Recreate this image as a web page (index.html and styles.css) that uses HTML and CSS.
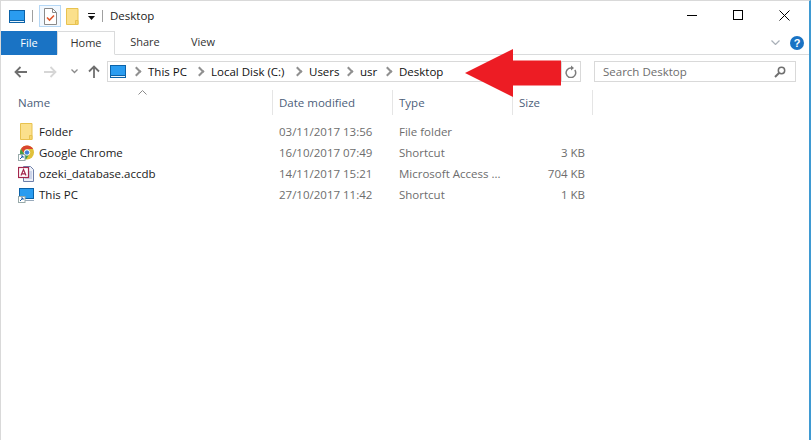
FILE: index.html
```html
<!DOCTYPE html>
<html lang="en">
<head>
<meta charset="utf-8">
<title>Desktop</title>
<link rel="stylesheet" href="styles.css">
</head>
<body>
<div class="window">
  <header class="titlebar">
    <svg class="ico monitor" viewBox="0 0 16 13"><rect width="16" height="13" fill="#0b62a8"/><rect x="1" y="1" width="14" height="9" fill="#2a9cf0"/><rect x="1" y="11" width="14" height="1" fill="#e8f4fc"/></svg>
    <span class="qsep"></span>
    <span class="qbtn"><svg class="ico" viewBox="0 0 13 17" width="13" height="17"><path d="M.5.5h8l4 4v12H.5z" fill="#fff" stroke="#8a8a8a"/><path d="M8.5.5v4h4" fill="none" stroke="#8a8a8a"/><path d="M3 9.500l2.500 2.500L10 7.500" fill="none" stroke="#e0562a" stroke-width="1.600"/></svg></span>
    <svg class="ico qfolder" viewBox="0 0 13 17" width="13" height="17"><path d="M.5.5h11.500v16H.5z" fill="#fbe08c" stroke="#e8c24f"/><path d="M9.500 12.500h2.500v4H9.500z" fill="#f6d66f" stroke="#e8c24f"/></svg>
    <svg class="ico qdrop" viewBox="0 0 7 7" width="7" height="7"><path d="M0 0h7v1H0z" fill="#111"/><path d="M0 3h7L3.500 7z" fill="#111"/></svg>
    <span class="qsep qsep-b"></span>
    <span class="title">Desktop</span>
    <span class="controls">
      <svg class="ctl" viewBox="0 0 46 20" width="46" height="20"><path d="M0 9.500h10" stroke="#000" fill="none"/></svg>
      <svg class="ctl" viewBox="0 0 46 20" width="46" height="20"><rect x="0.500" y="4.500" width="9" height="9" fill="none" stroke="#000"/></svg>
      <svg class="ctl ctl-x" viewBox="0 0 11 20" width="11" height="20"><path d="M.5 4.500l10 10M10.500 4.500l-10 10" stroke="#000" fill="none"/></svg>
    </span>
  </header>

  <nav class="ribbon">
    <span class="tab tab-file">File</span>
    <span class="tab tab-home">Home</span>
    <span class="tab tab-share">Share</span>
    <span class="tab tab-view">View</span>
    <span class="ribbon-end">
      <svg class="ico" viewBox="0 0 9 5" width="9" height="5"><path d="M.5.500l4 4 4-4" fill="none" stroke="#a9b0b8" stroke-width="1.200"/></svg>
      <span class="help">?</span>
    </span>
  </nav>

  <div class="navbar">
    <svg class="ico nav-back" viewBox="0 0 13 12" width="13" height="12"><path d="M6.500 1L1.500 6l5 5M1.500 6H13" fill="none" stroke="#6f6f6f" stroke-width="1.800"/></svg>
    <svg class="ico nav-fwd" viewBox="0 0 13 12" width="13" height="12"><path d="M6.500 1l5 5-5 5M11.500 6H0" fill="none" stroke="#d6d6d6" stroke-width="1.800"/></svg>
    <svg class="ico nav-down" viewBox="0 0 7 5" width="7" height="5"><path d="M.5.500l3 3 3-3" fill="none" stroke="#8a8a8a" stroke-width="1.300"/></svg>
    <svg class="ico nav-up" viewBox="0 0 12 13" width="12" height="13"><path d="M1 6.500l5-5 5 5M6 1.500V13" fill="none" stroke="#6f6f6f" stroke-width="1.800"/></svg>
    <div class="address">
      <svg class="ico addr-pc" viewBox="0 0 16 13" width="16" height="13"><rect width="16" height="13" fill="#0b62a8"/><rect x="1" y="1" width="14" height="9" fill="#2a9cf0"/><rect x="1" y="11" width="14" height="1" fill="#e8f4fc"/></svg>
      <span class="crumb crumb-pc">This PC</span>
      <span class="crumb crumb-disk">Local Disk (C:)</span>
      <span class="crumb crumb-users">Users</span>
      <span class="crumb crumb-usr">usr</span>
      <span class="crumb">Desktop</span>
    </div>
    <div class="refresh">
      <svg class="ico" viewBox="0 0 12 13" width="12" height="13"><path d="M9.800 4A4.800 4.800 0 1 1 6 2" fill="none" stroke="#7c7c7c" stroke-width="1.500" transform="translate(0 1)"/><path d="M6 .5v5l3-2.500z" fill="#7c7c7c"/></svg>
    </div>
    <div class="search">
      <span>Search Desktop</span>
      <svg class="ico" viewBox="0 0 12 12" width="12" height="12"><circle cx="7.500" cy="4.500" r="3.200" fill="none" stroke="#6f6f6f" stroke-width="1.500"/><path d="M5 7l-4 4" stroke="#6f6f6f" stroke-width="2"/></svg>
    </div>
  </div>

  <main class="list">
    <div class="row head">
      <span class="c-name">Name<svg class="sort" viewBox="0 0 9 5" width="9" height="5"><path d="M.5 4.500l4-4 4 4" fill="none" stroke="#8a8a8a"/></svg></span>
      <span class="c-date">Date modified</span>
      <span class="c-type">Type</span>
      <span class="c-size">Size</span>
    </div>
    <div class="rows">
      <div class="row">
        <span class="c-name"><svg class="ico fi" viewBox="0 0 16 17" width="16" height="17"><path d="M2.500.500h11.500v16H2.500z" fill="#fbe08c" stroke="#e8c24f"/><path d="M11.500 12.500H14v4h-2.500z" fill="#f6d66f" stroke="#e8c24f"/></svg>Folder</span>
        <span class="c-date">03/11/2017 13:56</span><span class="c-type">File folder</span><span class="c-size"></span>
      </div>
      <div class="row">
        <span class="c-name"><svg class="ico fi" viewBox="0 0 16 16" width="16" height="16"><circle cx="9" cy="7.500" r="7" fill="#e0c13a"/><path d="M9 .5a7 7 0 0 0-6 3.400l3 5.100a3.500 3.500 0 0 1 3-5h6.200A7 7 0 0 0 9 .5z" fill="#d9452e"/><path d="M3 3.900A7 7 0 0 0 8 14.400L11 9.500 6 9z" fill="#3f9d4a"/><circle cx="9" cy="7.500" r="2.700" fill="#3f7fd8" stroke="#fff"/><rect x=".5" y="9.500" width="6.500" height="6" fill="#fff" stroke="#9aa"/><path d="M2 14l3-3M3 11h2v2" stroke="#1f5fa8" fill="none"/></svg>Google Chrome</span>
        <span class="c-date">16/10/2017 07:49</span><span class="c-type">Shortcut</span><span class="c-size">3 KB</span>
      </div>
      <div class="row">
        <span class="c-name"><svg class="ico fi" viewBox="0 0 16 16" width="16" height="16"><path d="M5.500.500h7l3 3v12h-10z" fill="#eef1f8" stroke="#6f7fa8"/><path d="M7 6h7M7 8h7M7 10h7M7 12h7" stroke="#a9b6d8"/><rect x=".5" y="1.500" width="10" height="10" fill="#fff" stroke="#a4274d" stroke-width="1.200"/><path d="M3 9.500l2.500-6 2.500 6M3.800 7.800h3.400" fill="none" stroke="#a4274d" stroke-width="1.200"/></svg>ozeki_database.accdb</span>
        <span class="c-date">14/11/2017 15:21</span><span class="c-type">Microsoft Access ...</span><span class="c-size">704 KB</span>
      </div>
      <div class="row">
        <span class="c-name"><svg class="ico fi" viewBox="0 0 16 16" width="16" height="16"><rect x="1.500" y="1.500" width="14" height="10" fill="#2a9cf0" stroke="#0b62a8"/><path d="M5 13h11v1H5z" fill="#9ab"/><rect x=".5" y="9.500" width="6.500" height="6" fill="#fff" stroke="#9aa"/><path d="M2 14l3-3M3 11h2v2" stroke="#1f5fa8" fill="none"/></svg>This PC</span>
        <span class="c-date">27/10/2017 11:42</span><span class="c-type">Shortcut</span><span class="c-size">1 KB</span>
      </div>
    </div>
  </main>
</div>
<svg class="red-arrow" viewBox="0 0 96 48" width="96" height="48"><path d="M0 24L48 0v11.500h48v25H48V48z" fill="#ed1c24"/></svg>
</body>
</html>
```

FILE: styles.css
```css
* { box-sizing: border-box; }
html, body { margin: 0; height: 100%; overflow: hidden; }
body {
  font-family: "Open Sans", "Noto Sans", sans-serif;
  font-size: 11.5px;
  color: #1a1a1a;
  background: #fff;
  position: relative;
}
.window {
  height: 440px;
  width: 811px;
  display: flex;
  flex-direction: column;
  border-top: 1px solid #d9d9d9;
  border-left: 1px solid #d9d9d9;
  border-right: 2px solid #3f9ad2;
}
.ico { display: block; flex: none; }

.titlebar { height: 30px; display: flex; align-items: center; padding-left: 8px; flex: none; }
.monitor { width: 16px; height: 13px; }
.qsep { width: 1px; height: 12px; background: #a0a0a0; margin: 0 6px 0 7px; }
.qbtn {
  width: 22px; height: 22px; border: 1px solid #b5d7f5; background: #f2f8fe;
  display: flex; align-items: center; justify-content: center; margin-right: 5px;
}
.qdrop { margin-left: 9px; }
.qsep-b { margin: 0 7px 0 7px; }
.title { font-size: 11.5px; padding-bottom: 2px; }
.controls { margin-left: auto; display: flex; margin-right: 19px; }
.ctl { display: block; }

.ribbon { height: 24px; display: flex; align-items: stretch; border-bottom: 1px solid #dadbdc; flex: none; position: relative; }
.tab { display: flex; align-items: center; justify-content: center; font-size: 11px; color: #333; padding-bottom: 2px; }
.tab-file { width: 56px; background: #1a73c4; color: #fff; margin-bottom: -1px; }
.tab-home { width: 58px; border: 1px solid #dadbdc; border-bottom: 1px solid #fff; margin-bottom: -1px; }
.tab-share { width: 60px; }
.tab-view { width: 56px; }
.ribbon-end { margin-left: auto; display: flex; align-items: center; gap: 10px; margin-right: 5px; }
.help {
  width: 14px; height: 14px; border-radius: 50%; background: #1a73c4; color: #fff;
  font: bold 11px/14px "Liberation Sans", sans-serif; text-align: center; padding: 0;
}

.navbar { display: flex; align-items: center; height: 21px; margin-top: 6px; flex: none; padding-left: 13px; }
.nav-fwd { margin-left: 17px; }
.nav-down { margin-left: 14px; }
.nav-up { margin-left: 10px; }
.address {
  width: 455px; height: 21px; margin-left: 7px;
  border: 1px solid #d9d9d9; border-right: 0;
  display: flex; align-items: center; padding-left: 2px;
  font-size: 11.5px; color: #111;
}
.crumb { display: flex; align-items: center; white-space: nowrap; }
.crumb::before {
  content: ""; width: 5px; height: 5px; margin: 0 8px 0 8px; flex: none;
  border-top: 2px solid #909090; border-right: 2px solid #909090;
  transform: rotate(45deg);
}
.crumb-pc { width: 63px; margin-left: -1px; }
.crumb-disk { width: 98px; }
.crumb-users { width: 51px; }
.crumb-usr { width: 39px; }
.refresh {
  width: 20px; height: 21px; border: 1px solid #d9d9d9; margin-left: -1px;
  display: flex; align-items: center; justify-content: center;
}
.search {
  width: 202px; height: 21px; border: 1px solid #d9d9d9; margin-left: 13px;
  display: flex; align-items: center; justify-content: space-between;
  padding: 0 9px 0 8px; color: #6d6d6d;
}

.list { flex: 1; }
.row {
  display: grid;
  grid-template-columns: 255px 120px 120px 80px;
  margin-left: 17px;
  height: 21px;
  align-items: center;
  color: #6d6d6d;
}
.row .c-name { color: #1a1a1a; display: flex; align-items: center; }
.row .c-date, .row .c-type { padding-left: 6px; white-space: nowrap; }
.row .c-size { text-align: right; padding-right: 8px; }
.fi { margin-right: 5px; }
.head { height: 25px; margin-top: 8px; color: #4c607a; }
.head .c-name { color: #4c607a; height: 25px; position: relative; }
.head span { height: 25px; display: flex; align-items: center; border-right: 1px solid #e5e5e5; }
.head .c-size { justify-content: flex-start; padding-left: 6px; }
.sort { position: absolute; left: 120px; top: 0; }
.rows { margin-top: 6px; }

.red-arrow { position: absolute; left: 465px; top: 49px; }
```
